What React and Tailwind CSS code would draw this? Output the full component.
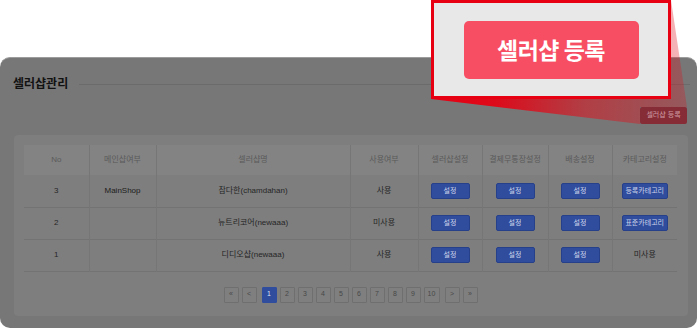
import React from 'react'

const cols = [65, 67, 194, 68, 64, 66, 64, 65]
const headers = ['No', '메인샵여부', '셀러샵명', '사용여부', '셀러샵설정', '결제무통장설정', '배송설정', '카테고리설정']

const rows = [
  { no: 3, main: 'MainShop', name: '참다한(chamdahan)', use: '사용', category: '등록카테고리' },
  { no: 2, main: '', name: '뉴트리코어(newaaa)', use: '미사용', category: '표준카테고리' },
  { no: 1, main: '', name: '디디오샵(newaaa)', use: '사용', category: null },
]

const pages = ['«', '<', '1', '2', '3', '4', '5', '6', '7', '8', '9', '10', '>', '»']

const SetButton = ({ children, wide }) => (
  <span
    className={`inline-flex items-center justify-center h-[16px] rounded-[2px] bg-[#2f4c9d] border border-[#27408a] text-[7px] text-[#cdd4ea] ${
      wide ? 'w-[46px]' : 'w-[39px]'
    }`}
  >
    {children}
  </span>
)

const App = () => {
  return (
    <div className="relative w-[700px] h-[330px] bg-white overflow-hidden font-['Liberation_Sans','Noto_Sans_CJK_KR',sans-serif]">
      <div className="mt-[57px] w-[697px] h-[271px] rounded-[10px] bg-[#777777] border-t border-[#9c9c9c] flex flex-col">
        <div className="flex items-center pl-[13px] pr-[7px] pt-[19px]">
          <span className="text-[12px] leading-[14px] font-bold text-[#121212]">셀러샵관리</span>
          <div className="flex-1 h-px bg-[#6b6b6b] ml-[11px]" />
        </div>

        <div className="flex justify-end pr-[10px] mt-[16px]">
          <span className="w-[47px] h-[17px] flex items-center justify-center rounded-[2px] bg-[#862c36] text-[7px] text-[#cf9ca3]">
            셀러샵 등록
          </span>
        </div>

        <div className="ml-[14px] mr-[9px] mt-[11px] h-[181px] rounded-[4px] bg-[#7e7e7e] pt-[10px] pl-[10px]">
          <table className="w-[653px] table-fixed border-collapse">
            <colgroup>
              {cols.map((w, i) => (
                <col key={i} style={{ width: w }} />
              ))}
            </colgroup>
            <thead>
              <tr className="h-[30px] bg-[#838383]">
                {headers.map((h, i) => (
                  <th
                    key={h}
                    className={`text-[8px] font-normal text-[#5a5a5a] ${i < 7 ? 'border-r border-[#767676]' : ''}`}
                  >
                    {h}
                  </th>
                ))}
              </tr>
            </thead>
            <tbody>
              {rows.map(row => (
                <tr key={row.no} className="h-[32px] border-b border-[#737373] text-[8px] text-[#262626] text-center">
                  <td className="border-r border-[#767676]">{row.no}</td>
                  <td className="border-r border-[#767676] text-[#1c1c1c]">{row.main}</td>
                  <td className="border-r border-[#767676]">{row.name}</td>
                  <td className="border-r border-[#767676]">{row.use}</td>
                  <td className="border-r border-[#767676]"><SetButton>설정</SetButton></td>
                  <td className="border-r border-[#767676]"><SetButton>설정</SetButton></td>
                  <td className="border-r border-[#767676]"><SetButton>설정</SetButton></td>
                  <td>{row.category ? <SetButton wide>{row.category}</SetButton> : '미사용'}</td>
                </tr>
              ))}
            </tbody>
          </table>

          <div className="w-[653px] flex justify-center gap-[3px] mt-[15px]">
            {pages.map((p, i) => (
              <span
                key={i}
                className={`h-[16px] flex items-center justify-center rounded-[1px] border text-[7px] ${
                  p === '10' ? 'w-[16px]' : 'w-[15px]'
                } ${
                  p === '1'
                    ? 'bg-[#2f4c9d] border-[#2f4c9d] text-[#dfe4f2]'
                    : 'bg-[#7f7f7f] border-[#6f6f6f] text-[#484848]'
                } ${i === 2 || i === 12 ? 'ml-[2px]' : ''}`}
              >
                {p}
              </span>
            ))}
          </div>
        </div>
      </div>

      <svg className="absolute top-0 left-0 pointer-events-none" width="700" height="330">
        <defs>
          <linearGradient id="wedge" gradientUnits="userSpaceOnUse" x1="431" y1="99" x2="688" y2="112">
            <stop offset="0" stopColor="#e60012" stopOpacity="1" />
            <stop offset="0.25" stopColor="#e60012" stopOpacity="0.92" />
            <stop offset="0.6" stopColor="#e0101c" stopOpacity="0.55" />
            <stop offset="1" stopColor="#e0101c" stopOpacity="0.28" />
          </linearGradient>
        </defs>
        <polygon points="431,99 640,124 640,107 687,107 671,0" fill="url(#wedge)" />
      </svg>

      <div className="absolute left-[431px] top-0 w-[240px] h-[99px] border-[3px] border-[#e60012] bg-[#e8e8e8] flex items-center justify-center">
        <div className="w-[175px] h-[58px] rounded-[5px] bg-[#f74e63] flex items-center justify-center">
          <span className="text-[23px] leading-none font-bold text-white tracking-[-0.5px] font-['Noto_Sans_CJK_KR',sans-serif]">
            셀러샵 등록
          </span>
        </div>
      </div>
    </div>
  )
}

export default App
